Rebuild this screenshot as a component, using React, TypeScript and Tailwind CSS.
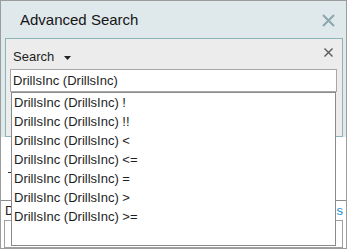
import React from "react";

const items = [
  "DrillsInc (DrillsInc) !",
  "DrillsInc (DrillsInc) !!",
  "DrillsInc (DrillsInc) <",
  "DrillsInc (DrillsInc) <=",
  "DrillsInc (DrillsInc) =",
  "DrillsInc (DrillsInc) >",
  "DrillsInc (DrillsInc) >=",
];

export default function App() {
  return (
    <div
      className="relative w-[347px] h-[249px] border border-[#9c9c9c] bg-[#dfe8eb] flex flex-col overflow-hidden text-[#1e1e1e]"
      style={{ fontFamily: '"Liberation Sans", Arial, sans-serif' }}
    >
      {/* Title bar */}
      <div className="h-[37px] shrink-0 flex items-center justify-between pl-[19px] pr-[11px]">
        <span className="text-[15px] leading-[18px] text-[#151515]">Advanced Search</span>
        <svg width="13" height="13" viewBox="0 0 13 13" className="mt-[1px]">
          <path d="M1 1 L12 12 M12 1 L1 12" stroke="#8aa7ac" strokeWidth="2" fill="none" />
        </svg>
      </div>

      {/* Search panel */}
      <div className="h-[99px] shrink-0 ml-[4px] mr-[3px] border border-[#8db4b7] bg-[#ececec] flex flex-col">
        <div className="h-[30px] flex justify-between pl-[7px] pr-[9px]">
          <div className="mt-[10px] h-[16px] flex items-center">
            <span className="text-[13px] leading-[16px]">Search</span>
            <svg width="7" height="4" viewBox="0 0 7 4" className="ml-[10px] mt-[1px]">
              <path d="M0 0 L7 0 L3.5 4 Z" fill="#222" />
            </svg>
          </div>
          <svg width="9" height="9" viewBox="0 0 9 9" className="mt-[9px]">
            <path d="M0.5 0.5 L8.5 8.5 M8.5 0.5 L0.5 8.5" stroke="#5a5a5a" strokeWidth="1.4" fill="none" />
          </svg>
        </div>
        <div className="ml-[4px] mr-[5px] h-[23px] border border-[#a8a8a8] bg-white flex items-center pl-[2px]">
          <span className="text-[13px] leading-[16px]">DrillsInc (DrillsInc)</span>
        </div>
      </div>

      {/* Lower content */}
      <div className="flex-1 bg-white flex flex-col">
        <div className="h-[63px] pl-[7px] pt-[35px]">
          <div className="w-[4px] h-[1px] bg-[#333]" />
        </div>
        <div className="h-[20px] border-t border-[#8c8c8c] flex items-center justify-between pl-[4px] pr-[3px]">
          <span className="text-[13px] leading-[16px]">D</span>
          <span className="text-[13px] leading-[16px] text-[#1a8fd6]">s</span>
        </div>
        <div className="h-[28px] ml-[3px] mr-[3px] border border-[#a0a0a0] bg-white" />
      </div>

      {/* Autocomplete dropdown overlay */}
      <div className="absolute left-[10px] top-[91px] w-[325px] h-[154px] border border-[#8b8b8b] bg-white flex flex-col">
        {items.map((t) => (
          <div key={t} className="h-[19px] flex items-center pl-[2px] text-[13px] leading-[16px] whitespace-pre">
            {t}
          </div>
        ))}
      </div>
    </div>
  );
}
